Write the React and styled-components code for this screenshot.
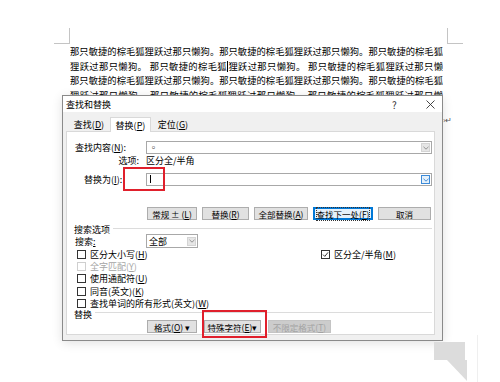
import React from "react";
import styled, { createGlobalStyle } from "styled-components";

const GlobalStyle = createGlobalStyle`
  body {
    margin: 0;
    background: #fff;
    font-family: "Noto Sans CJK SC", "Noto Sans", sans-serif;
    color: #000;
  }
`;

const Page = styled.div`
  position: relative;
  width: 500px;
  height: 382px;
  overflow: hidden;
  background: #fff;
`;

const Corner = styled.div`
  position: absolute;
  top: 28px;
  left: ${(p) => p.$left}px;
  width: 15px;
  height: 15px;
  border-bottom: 1px solid #c4c4c4;
  ${(p) => (p.$side === "left" ? "border-right" : "border-left")}: 1px solid #c4c4c4;
`;

const Doc = styled.div`
  padding: 44px 0 0 70px;
`;

const Line = styled.div`
  width: 373px;
  height: 14.5px;
  font-size: 9.3px;
  line-height: 14.5px;
  text-align: justify;
  text-align-last: justify;
  overflow: hidden;
`;

const Caret = styled.span`
  display: inline-block;
  width: 0;
  height: 11px;
  border-left: 1px solid #000;
  vertical-align: -2px;
`;

const Mark = styled.span`
  position: absolute;
  left: 443px;
  top: 114px;
  font-size: 8px;
  color: #555;
`;

const Dialog = styled.div`
  position: absolute;
  left: 62px;
  top: 95px;
  width: 381px;
  height: 246px;
  box-sizing: border-box;
  border: 1px solid #8a8a8a;
  background: #f0f0f0;
  box-shadow: 0 2px 10px rgba(0, 0, 0, 0.12);
  display: flex;
  flex-direction: column;
  font-size: 9px;
`;

const TitleBar = styled.div`
  height: 16px;
  background: #fff;
  display: flex;
  align-items: center;
  padding-left: 3px;
`;

const Title = styled.span`
  flex: 1;
  font-size: 9px;
`;

const Help = styled.span`
  width: 34px;
  font-size: 10px;
  color: #333;
`;

const Close = styled.span`
  width: 16px;
  display: flex;
  align-items: center;
`;

const Tabs = styled.div`
  height: 19px;
  display: flex;
  align-items: flex-end;
  padding-left: 5px;
`;

const Tab = styled.div`
  width: ${(p) => p.$w}px;
  height: ${(p) => (p.$active ? 15 : 14)}px;
  box-sizing: border-box;
  display: flex;
  align-items: center;
  justify-content: center;
  font-size: 9px;
  background: ${(p) => (p.$active ? "#fff" : "transparent")};
  border: 1px solid ${(p) => (p.$active ? "#d9d9d9" : "transparent")};
  border-bottom: none;
  margin-bottom: ${(p) => (p.$active ? -1 : 0)}px;
  position: relative;
  z-index: 1;
`;

const Panel = styled.div`
  flex: 1;
  margin: 0 7px 5px 3px;
  background: #fff;
  border: 1px solid #d9d9d9;
  padding: 9px 2px 0 0;
  display: flex;
  flex-direction: column;
`;

const FieldRow = styled.div`
  position: relative;
  display: grid;
  grid-template-columns: 79px 1fr;
  align-items: center;
  margin-top: ${(p) => p.$mt || 0}px;
  height: ${(p) => p.$h || 13}px;
`;

const Label = styled.span`
  padding-left: ${(p) => p.$pl}px;
  text-align: ${(p) => p.$align || "left"};
  padding-right: ${(p) => p.$pr || 0}px;
  white-space: nowrap;
`;

const Input = styled.div`
  height: 13px;
  box-sizing: border-box;
  border: 1px solid #a8a8a8;
  display: flex;
  align-items: center;
  padding-left: 2px;
`;

const InputText = styled.span`
  flex: 1;
  font-size: 9px;
  line-height: 1;
`;

const Drop = styled.div`
  width: 9px;
  height: 9px;
  margin-right: 1px;
  box-sizing: border-box;
  display: flex;
  align-items: center;
  justify-content: center;
  background: ${(p) => (p.$focus ? "#e5f1fb" : "#e6e6e6")};
  border: 1px solid ${(p) => (p.$focus ? "#3c8ad8" : "#d4d4d4")};
`;

const TextCaret = styled.span`
  display: inline-block;
  width: 0;
  height: 8px;
  border-left: 1px solid #000;
  margin-left: 1px;
`;

const RedBox = styled.div`
  position: absolute;
  left: ${(p) => p.$x}px;
  top: ${(p) => p.$y}px;
  width: ${(p) => p.$w}px;
  height: ${(p) => p.$h}px;
  box-sizing: border-box;
  border: 2px solid #e0202c;
  pointer-events: none;
`;

const ButtonRow = styled.div`
  display: flex;
  gap: ${(p) => p.$gap || 5}px;
  padding-left: 80px;
  margin-top: ${(p) => p.$mt || 0}px;
`;

const Button = styled.div`
  position: relative;
  width: ${(p) => p.$w}px;
  height: 13px;
  box-sizing: border-box;
  display: flex;
  align-items: center;
  justify-content: center;
  font-size: 8.5px;
  white-space: nowrap;
  background: ${(p) => (p.$focus ? "#e5f1fb" : p.$disabled ? "#cccccc" : "#e1e1e1")};
  color: ${(p) => (p.$disabled ? "#a3a3a3" : "#000")};
  border: 1px solid ${(p) => (p.$focus ? "#0078d7" : p.$disabled ? "#c4c4c4" : "#adadad")};
  box-shadow: ${(p) => (p.$focus ? "inset 0 0 0 1px #0078d7" : "none")};
`;

const FocusText = styled.span`
  outline: 1px dotted #333;
  outline-offset: 0;
`;

const GroupHead = styled.div`
  display: flex;
  align-items: center;
  gap: 3px;
  padding-left: 7px;
  height: 10px;
  margin-top: ${(p) => p.$mt || 0}px;
  white-space: nowrap;
  &::after {
    content: "";
    flex: 1;
    border-top: 1px solid #dcdcdc;
    margin-top: ${(p) => p.$lineOffset || 0}px;
  }
`;

const Options = styled.div`
  display: flex;
`;

const OptLeft = styled.div`
  width: 254px;
  display: flex;
  flex-direction: column;
`;

const SearchRow = styled.div`
  display: grid;
  grid-template-columns: 79px 52px;
  align-items: center;
  height: 14px;
`;

const Select = styled.div`
  height: 14px;
  box-sizing: border-box;
  border: 1px solid #a8a8a8;
  display: flex;
  align-items: center;
  padding-left: 2px;
  background: #fff;
`;

const CheckRow = styled.div`
  display: flex;
  align-items: center;
  gap: 4px;
  height: 12.3px;
  padding-left: ${(p) => p.$pl ?? 10}px;
  color: ${(p) => (p.$disabled ? "#a6a6a6" : "#000")};
  white-space: nowrap;
`;

const Box = styled.span`
  width: 9px;
  height: 9px;
  box-sizing: border-box;
  border: 1px solid ${(p) => (p.$disabled ? "#cfcfcf" : "#333")};
  display: flex;
  align-items: center;
  justify-content: center;
  background: #fff;
`;

const OptRight = styled.div`
  padding-top: 14px;
`;

const Deco = styled.svg`
  position: absolute;
  left: 0;
  top: 0;
`;

function Chevron({ color = "#777" }) {
  return (
    <svg width="6" height="4" viewBox="0 0 6 4">
      <path d="M0.5 0.8 L3 3.2 L5.5 0.8" fill="none" stroke={color} strokeWidth="0.9" />
    </svg>
  );
}

function Check({ checked, disabled, children }) {
  return (
    <CheckRow $disabled={disabled} $pl={checked ? 0 : 10}>
      <Box $disabled={disabled}>
        {checked && (
          <svg width="7" height="7" viewBox="0 0 7 7">
            <path d="M1 3.6 L2.8 5.4 L6 1.4" fill="none" stroke="#222" strokeWidth="0.9" />
          </svg>
        )}
      </Box>
      <span>{children}</span>
    </CheckRow>
  );
}

const sentence = "那只敏捷的棕毛狐狸跃过那只懒狗。";

function App() {
  return (
    <Page>
      <GlobalStyle />
      <Corner $left={54} $side="left" />
      <Corner $left={447} $side="right" />
      <Doc>
        <Line>{sentence + sentence + "那只敏捷的棕毛狐"}</Line>
        <Line>
          狸跃过那只懒狗。 那只敏捷的棕毛狐
          <Caret />
          狸跃过那只懒狗。 那只敏捷的棕毛狐狸跃过那只懒狗。
        </Line>
        <Line>{sentence + sentence + "那只敏捷的棕毛狐"}</Line>
        <Line>狸跃过那只懒狗。 那只敏捷的棕毛狐狸跃过那只懒狗。 那只敏捷的棕毛狐狸跃过那只懒狗。</Line>
      </Doc>
      <Mark>›↵</Mark>

      <Dialog>
        <TitleBar>
          <Title>查找和替换</Title>
          <Help>?</Help>
          <Close>
            <svg width="9" height="9" viewBox="0 0 9 9">
              <path d="M0.5 0.5 L8.5 8.5 M8.5 0.5 L0.5 8.5" stroke="#333" strokeWidth="0.9" />
            </svg>
          </Close>
        </TitleBar>
        <Tabs>
          <Tab $w={42}>查找(<u>D</u>)</Tab>
          <Tab $w={41} $active>替换(<u>P</u>)</Tab>
          <Tab $w={44}>定位(<u>G</u>)</Tab>
        </Tabs>
        <Panel>
          <FieldRow>
            <Label $pl={8}>查找内容(<u>N</u>):</Label>
            <Input>
              <InputText>◦</InputText>
              <Drop>
                <Chevron color="#8a8a8a" />
              </Drop>
            </Input>
          </FieldRow>
          <FieldRow $h={12}>
            <Label $align="right" $pr={7}>选项:</Label>
            <span>区分全/半角</span>
          </FieldRow>
          <FieldRow $mt={7}>
            <Label $pl={17}>替换为(<u>I</u>):</Label>
            <Input>
              <InputText>
                <TextCaret />
              </InputText>
              <Drop $focus>
                <Chevron color="#2f7fd0" />
              </Drop>
            </Input>
            <RedBox $x={56} $y={-6} $w={42} $h={24} />
          </FieldRow>

          <ButtonRow $mt={21}>
            <Button $w={50}>常规 ± (<u>L</u>)</Button>
            <Button $w={47}>替换(<u>R</u>)</Button>
            <Button $w={54}>全部替换(<u>A</u>)</Button>
            <Button $w={60} $focus>
              <FocusText>查找下一处(<u>F</u>)</FocusText>
            </Button>
            <Button $w={53}>取消</Button>
          </ButtonRow>

          <GroupHead $mt={4} $lineOffset={-1}>搜索选项</GroupHead>
          <Options>
            <OptLeft>
              <SearchRow>
                <Label $pl={8}>搜索<u>:</u></Label>
                <Select>
                  <InputText>全部</InputText>
                  <Drop>
                    <Chevron color="#8a8a8a" />
                  </Drop>
                </Select>
              </SearchRow>
              <Check>区分大小写(<u>H</u>)</Check>
              <Check disabled>全字匹配(<u>Y</u>)</Check>
              <Check>使用通配符(<u>U</u>)</Check>
              <Check>同音(英文)(<u>K</u>)</Check>
              <Check>查找单词的所有形式(英文)(<u>W</u>)</Check>
            </OptLeft>
            <OptRight>
              <Check checked>区分全/半角(<u>M</u>)</Check>
            </OptRight>
          </Options>

          <GroupHead $lineOffset={-4}>替换</GroupHead>
          <ButtonRow $mt={1} $gap={7}>
            <Button $w={50}>格式(<u>O</u>) ▾</Button>
            <Button $w={57}>
              特殊字符(<u>E</u>)▾
              <RedBox $x={-3} $y={-11} $w={65} $h={28} />
            </Button>
            <Button $w={63} $disabled>不限定格式(<u>T</u>)</Button>
          </ButtonRow>
        </Panel>
      </Dialog>

      <Deco width="500" height="382" viewBox="0 0 500 382">
        <rect x="434" y="342" width="31" height="18" fill="#dcdcdc" />
        <polygon points="447,360 467,360 467,381" fill="#dcdcdc" />
        <line x1="477.5" y1="335" x2="477.5" y2="382" stroke="#efefef" strokeWidth="1" />
      </Deco>
    </Page>
  );
}

export default App;
